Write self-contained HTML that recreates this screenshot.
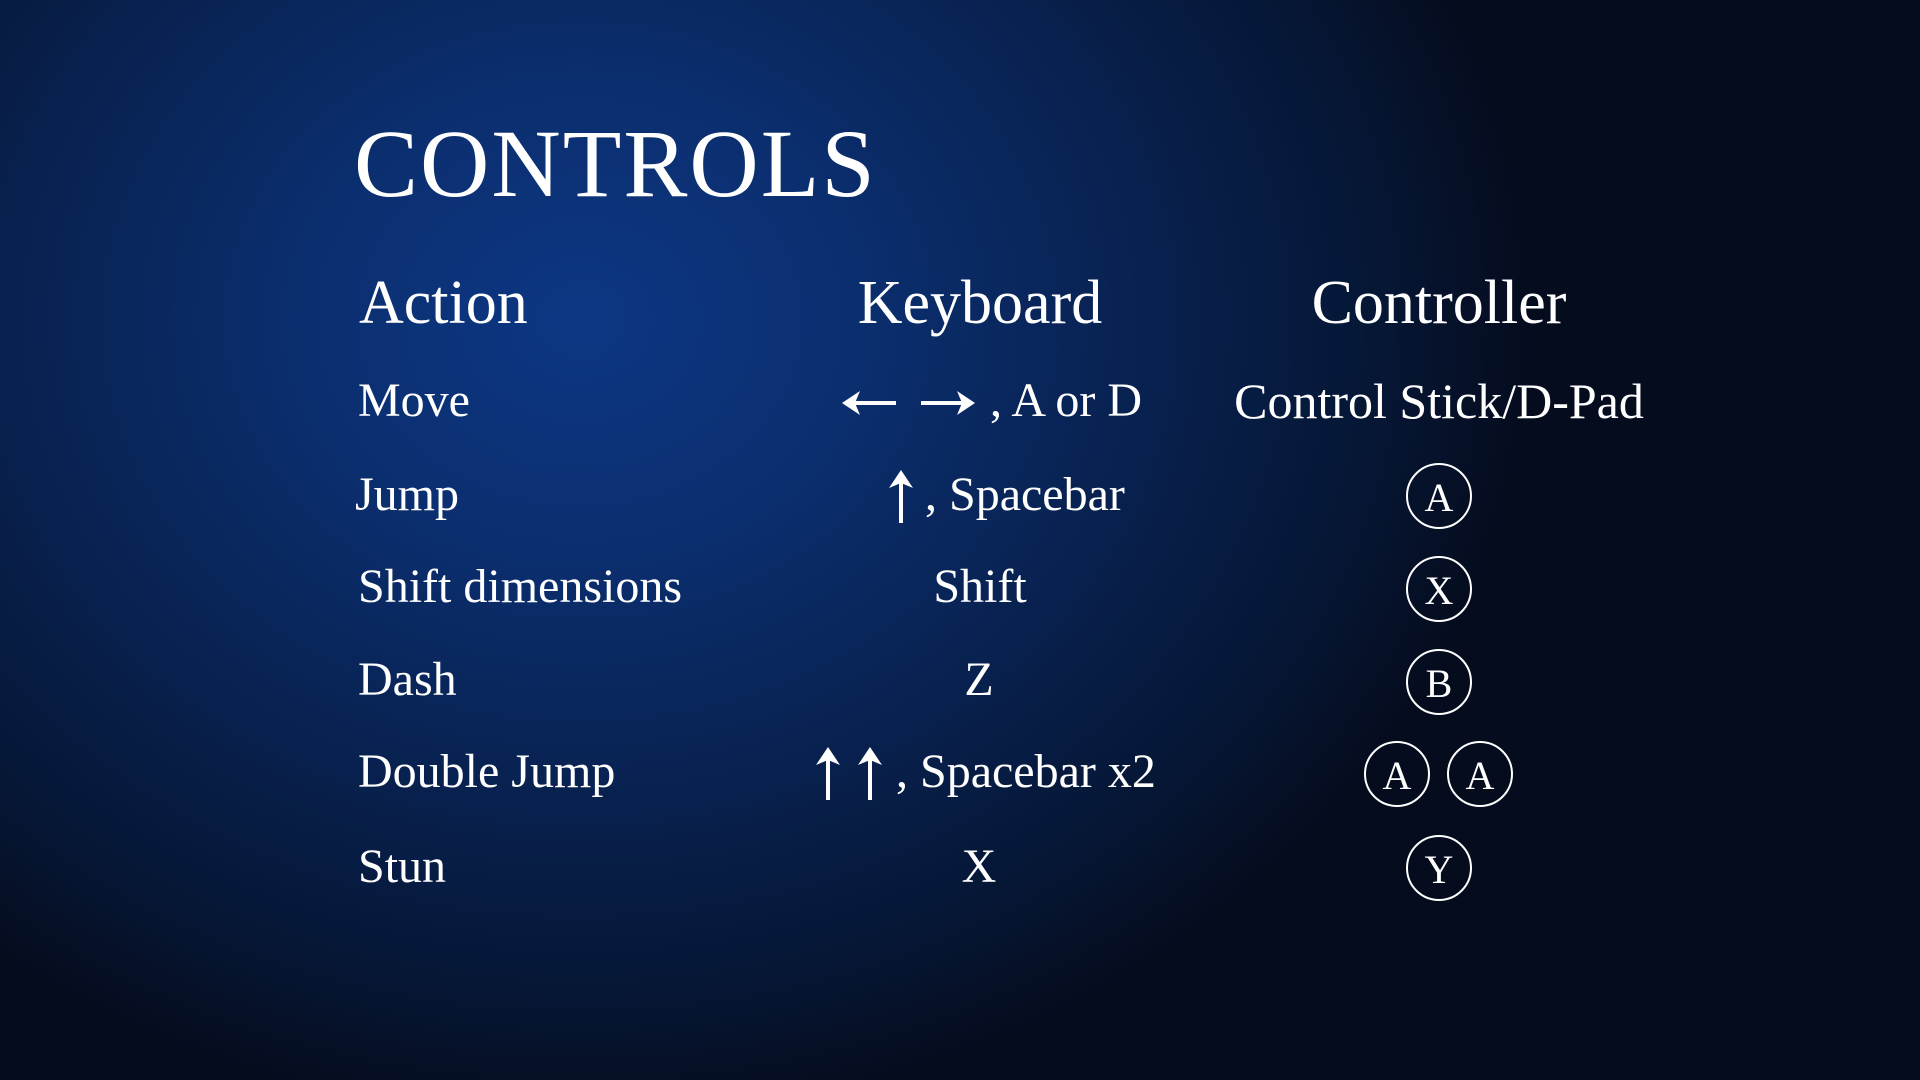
<!DOCTYPE html>
<html><head><meta charset="utf-8"><style>
html,body{margin:0;padding:0;}
body{width:1920px;height:1080px;overflow:hidden;position:relative;font-family:"Liberation Serif",serif;color:#fff;
background:radial-gradient(ellipse 950px 800px at 580px 320px,#0d3784 0%,#0b2e6e 30%,#08214f 60%,#061634 85%,#050c1e 100%);}
.t{position:absolute;white-space:nowrap;line-height:1;}
.title{left:354px;top:116px;font-size:96px;letter-spacing:2px;}
.h{font-size:62px;top:272px;}
.r{font-size:48px;}
.c{transform:translateX(-50%);}
.circ{position:absolute;width:62px;height:62px;border:2.5px solid #fff;border-radius:50%;transform:translate(-50%,-50%);display:flex;align-items:center;justify-content:center;font-size:40px;line-height:1;}
.circ span{margin-top:4px;}
svg{position:absolute;}
</style></head><body>
<div class="t title">CONTROLS</div>
<div class="t h" style="left:359px">Action</div>
<div class="t h c" style="left:980px">Keyboard</div>
<div class="t h c" style="left:1439px">Controller</div>

<div class="t r" style="left:358px;top:377px">Move</div>
<div class="t r" style="left:355px;top:471px">Jump</div>
<div class="t r" style="left:358px;top:563px">Shift dimensions</div>
<div class="t r" style="left:358px;top:656px">Dash</div>
<div class="t r" style="left:358px;top:748px">Double Jump</div>
<div class="t r" style="left:358px;top:843px">Stun</div>

<svg width="140" height="40" style="left:840px;top:383px" viewBox="0 0 140 40">
<path d="M6 20H56" stroke="#fff" stroke-width="4"/><path d="M2 20L20 8L15 20L20 32Z" fill="#fff"/>
<path d="M81 20H130" stroke="#fff" stroke-width="4"/><path d="M135 20L117 8L122 20L117 32Z" fill="#fff"/>
</svg>
<div class="t r" style="left:990px;top:377px">, A or D</div>

<svg width="40" height="60" style="left:881px;top:468px" viewBox="0 0 40 60">
<path d="M20 8V55" stroke="#fff" stroke-width="4"/><path d="M20 2L8 20L20 15L32 20Z" fill="#fff"/>
</svg>
<div class="t r" style="left:925px;top:471px">, Spacebar</div>

<div class="t r c" style="left:980px;top:563px">Shift</div>
<div class="t r c" style="left:979px;top:656px">Z</div>

<svg width="90" height="60" style="left:808px;top:745px" viewBox="0 0 90 60">
<path d="M20 8V55" stroke="#fff" stroke-width="4"/><path d="M20 2L8 20L20 15L32 20Z" fill="#fff"/>
<path d="M62 8V55" stroke="#fff" stroke-width="4"/><path d="M62 2L50 20L62 15L74 20Z" fill="#fff"/>
</svg>
<div class="t r" style="left:896px;top:748px">, Spacebar x2</div>
<div class="t r c" style="left:979px;top:843px">X</div>

<div class="t r c" style="left:1439px;top:376px;font-size:50px">Control Stick/D-Pad</div>
<div class="circ" style="left:1439px;top:496px"><span>A</span></div>
<div class="circ" style="left:1439px;top:589px"><span>X</span></div>
<div class="circ" style="left:1439px;top:682px"><span>B</span></div>
<div class="circ" style="left:1397px;top:774px"><span>A</span></div>
<div class="circ" style="left:1480px;top:774px"><span>A</span></div>
<div class="circ" style="left:1439px;top:868px"><span>Y</span></div>
</body></html>
